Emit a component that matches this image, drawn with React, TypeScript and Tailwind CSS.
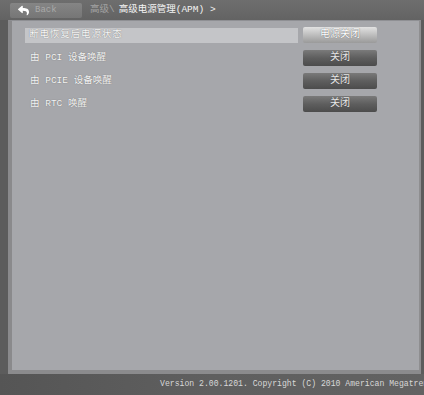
import { FaReply } from "react-icons/fa";

const font = {
  fontFamily: '"Liberation Mono", "Noto Sans CJK SC", monospace',
};

interface Item {
  label: string;
  value: string;
  active?: boolean;
}

const items: Item[] = [
  { label: "断电恢复后电源状态", value: "电源关闭", active: true },
  { label: "由 PCI 设备唤醒", value: "关闭" },
  { label: "由 PCIE 设备唤醒", value: "关闭" },
  { label: "由 RTC 唤醒", value: "关闭" },
];

function Row({ item }: { item: Item }) {
  return (
    <div className="flex items-center h-[16px] gap-[5px]">
      <div
        className={
          item.active
            ? "w-[273px] h-[15px] flex items-center pl-[4px] bg-[#c4c5c8] text-[#f6f6f6] tracking-[0.9px]"
            : "w-[273px] h-[15px] flex items-center pl-[5px] text-[#f4f4f4]"
        }
      >
        <span className="text-[9.5px] leading-none [text-shadow:0_0_1px_#666]">
          {item.label}
        </span>
      </div>
      <div
        className={
          item.active
            ? "w-[74px] h-[16px] flex items-center justify-center rounded-[2px] bg-gradient-to-b from-[#e2e2e2] via-[#bdbdbd] to-[#9a9a9a] text-white"
            : "w-[74px] h-[16px] flex items-center justify-center rounded-[2px] bg-gradient-to-b from-[#7a7a7a] via-[#5e5e5e] to-[#4c4c4c] text-[#e8e8e8]"
        }
      >
        <span className="text-[10px] leading-none [text-shadow:0_0_1px_#444]">
          {item.value}
        </span>
      </div>
    </div>
  );
}

export default function App() {
  return (
    <div
      className="w-[424px] h-[395px] flex flex-col bg-[#5c5c5c] overflow-hidden"
      style={font}
    >
      {/* header bar */}
      <div className="h-[20px] flex items-center bg-gradient-to-b from-[#6e6e6e] to-[#636363] pl-[10px]">
        <div className="w-[72px] h-[15px] flex items-center gap-[6px] pl-[8px] rounded-[2px] bg-gradient-to-b from-[#858585] to-[#767676]">
          <FaReply className="w-[11px] h-[11px] text-white" />
          <span className="text-[9px] leading-none text-[#a9a9a9]">Back</span>
        </div>
        <div className="ml-[8px] flex items-center text-[9.5px] leading-none">
          <span className="text-[#a2a2a2]">高级\ </span>
          <span className="ml-[4px] text-[#f4f4f4]">高级电源管理(APM) &gt;</span>
        </div>
      </div>

      {/* main panel */}
      <div className="h-[350px] flex pl-[8px] pr-[3px]">
        <div className="flex-1 flex bg-[#a6a7ab] border-l-[4px] border-l-[#8a8a8c] border-r-[2px] border-r-[#8e8e90] border-t border-t-[#8f9094]">
          <div className="flex flex-col gap-[7px] pt-[6px] pl-[13px]">
            {items.map((it) => (
              <Row key={it.label} item={it} />
            ))}
          </div>
        </div>
      </div>

      {/* footer */}
      <div className="h-[4px] bg-[#8b8b8d] ml-[8px] mr-[3px]" />
      <div className="flex-1 flex items-center pl-[160px] bg-gradient-to-r from-[#555555] via-[#5f5f5f] to-[#626262]">
        <span className="text-[8.15px] leading-none whitespace-nowrap text-[#d8d8d8]">
          Version 2.00.1201. Copyright (C) 2010 American Megatrends
        </span>
      </div>
    </div>
  );
}
